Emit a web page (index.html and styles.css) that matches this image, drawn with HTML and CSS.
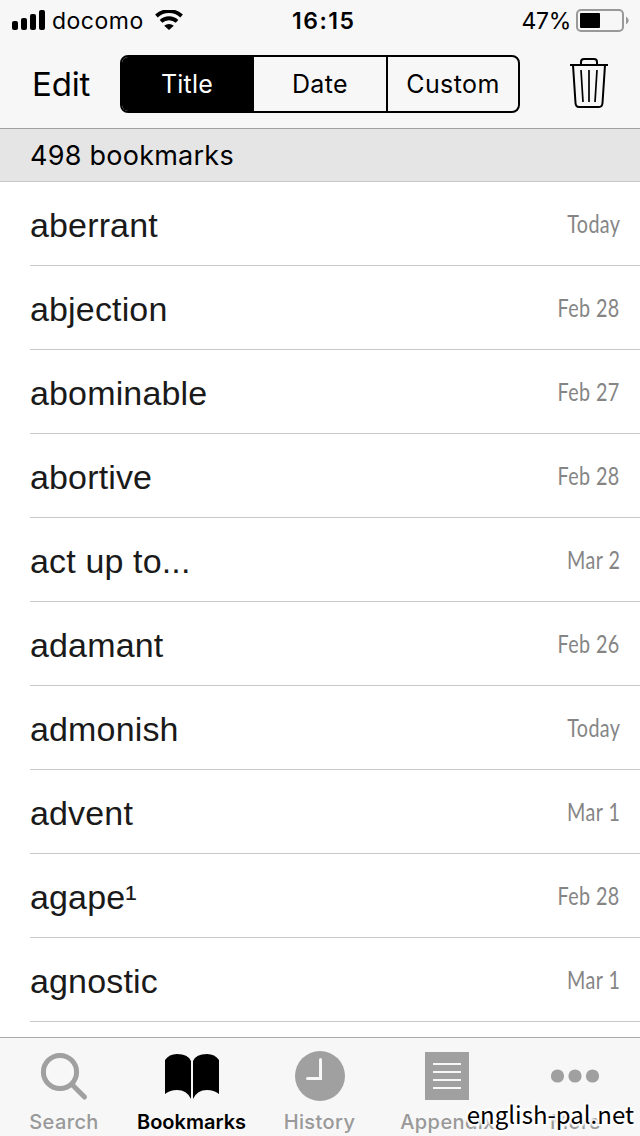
FILE: index.html
```html
<!DOCTYPE html>
<html lang="en">
<head>
<meta charset="utf-8">
<title>Bookmarks</title>
<link rel="stylesheet" href="styles.css">
</head>
<body>
<div class="app">
  <header class="top">
    <div class="status">
      <svg class="signal" width="34" height="20" viewBox="0 0 34 20"><rect x="0" y="11" width="6" height="9" rx="2"/><rect x="9" y="8" width="6" height="12" rx="2"/><rect x="18" y="4" width="6" height="16" rx="2"/><rect x="27" y="0" width="6" height="20" rx="2"/></svg>
      <span class="carrier">docomo</span>
      <svg class="wifi" width="28" height="20" viewBox="0 0 28 20"><path d="M1.400 6a18.500 18.500 0 0 1 25.200 0M6 11.400a11.800 11.800 0 0 1 16 0" fill="none" stroke="#000" stroke-width="3.800"/><path d="M9.200 15.800a7 7 0 0 1 9.600 0L14 20z"/></svg>
      <span class="clock">16:15</span>
      <span class="percent">47%</span>
      <svg class="battery" width="53" height="24" viewBox="0 0 53 24"><rect x="1" y="1" width="46" height="21" rx="4" fill="none" stroke="#999" stroke-width="2"/><rect x="4" y="4" width="20" height="15" rx="1"/><path d="M50 7.500c3.500 2.500 3.500 5.500 0 8z" fill="#999"/></svg>
    </div>
    <nav class="toolbar">
      <span class="edit">Edit</span>
      <div class="segments"><span class="segment chosen">Title</span><span class="segment">Date</span><span class="segment">Custom</span></div>
      <svg class="trash" width="38" height="52" viewBox="0 0 38 52" fill="none" stroke="#000" stroke-width="2"><path d="M0 8h38M11 8V5q0-3 3-3h10q3 0 3 3v3M3 8l2.500 38q.3 4 3.500 4h20q3.200 0 3.500-4L35 8"/><path d="M11 13l2 32M19 13v32M27 13l-2 32" stroke-width="1.700"/></svg>
    </nav>
  </header>
  <div class="count"><span>498 bookmarks</span></div>
  <main class="list">
    <div class="row"><span class="word">aberrant</span><span class="date">Today</span></div>
    <div class="row"><span class="word">abjection</span><span class="date">Feb 28</span></div>
    <div class="row"><span class="word">abominable</span><span class="date">Feb 27</span></div>
    <div class="row"><span class="word">abortive</span><span class="date">Feb 28</span></div>
    <div class="row"><span class="word">act up to...</span><span class="date">Mar 2</span></div>
    <div class="row"><span class="word">adamant</span><span class="date">Feb 26</span></div>
    <div class="row"><span class="word">admonish</span><span class="date">Today</span></div>
    <div class="row"><span class="word">advent</span><span class="date">Mar 1</span></div>
    <div class="row"><span class="word">agape¹</span><span class="date">Feb 28</span></div>
    <div class="row"><span class="word">agnostic</span><span class="date">Mar 1</span></div>
  </main>
  <footer class="tabs">
    <div class="tab"><svg width="56" height="54" viewBox="0 0 56 54" fill="none" stroke="#a0a0a0"><circle cx="24" cy="25" r="16.600" stroke-width="5"/><path d="M36 37.500L48.500 50" stroke-width="5" stroke-linecap="round"/></svg><span>Search</span></div>
    <div class="tab active"><svg width="56" height="54" viewBox="0 0 56 54"><path d="M2 13Q6 7 14 7q11 0 14 7v38Q24 43 14 43q-7 0-12 4zM30 14q3-7 14-7 8 0 12 6v34q-5-4-12-4-10 0-14 9z"/></svg><span>Bookmarks</span></div>
    <div class="tab"><svg width="56" height="54" viewBox="0 0 56 54"><circle cx="29" cy="29" r="25" fill="#a0a0a0"/><path d="M29.500 12.500v19H16.500" fill="none" stroke="#f7f7f7" stroke-width="3" stroke-linecap="round"/></svg><span>History</span></div>
    <div class="tab"><svg width="56" height="54" viewBox="0 0 56 54"><path d="M6 5h44v48H6z" fill="#a0a0a0"/><path d="M14 17h28M14 25h28M14 33h28M14 41h28" stroke="#f7f7f7" stroke-width="2"/></svg><span>Appendix</span></div>
    <div class="tab"><svg width="56" height="54" viewBox="0 0 56 54" fill="#a0a0a0"><circle cx="10.500" cy="29" r="6.600"/><circle cx="28" cy="29" r="6.600"/><circle cx="45.500" cy="29" r="6.600"/></svg><span>More</span></div>
  </footer>
  <div class="watermark">english-pal.net</div>
</div>
</body>
</html>
```
FILE: styles.css
```css
* { box-sizing: border-box; }
body { margin: 0; background: #fff; font-family: Inter, sans-serif; color: #000; }
svg { display: block; flex: none; }
.app { position: relative; width: 640px; height: 1136px; display: flex; flex-direction: column; overflow: hidden; }
.top { height: 129px; background: #f7f7f7; border-bottom: 1px solid #a0a0a0; flex: none; }
.status { height: 40px; display: flex; align-items: center; padding: 0 11px 0 12px; font-size: 23px; line-height: 40px; }
.status span { padding-top: 2px; }
.carrier { width: 103px; padding-left: 6px; letter-spacing: .5px; }
.wifi { margin-left: 6px; }
.clock { margin-left: 109px; width: 70px; font-weight: 600; letter-spacing: 1.5px; }
.percent { margin-left: auto; letter-spacing: -.3px; margin-right: 5px; }
.battery { margin-top: 1px; }
.toolbar { height: 88px; display: flex; align-items: center; padding: 0 32px; }
.edit { width: 88px; font-size: 33px; letter-spacing: -.2px; }
.segments { width: 400px; height: 58px; display: grid; grid-template-columns: repeat(3, 132px); border: 2px solid #000; border-radius: 8px; overflow: hidden; }
.segment { display: flex; align-items: center; justify-content: center; font-size: 25px; letter-spacing: .4px; }
.segment:last-child { border-left: 2px solid #000; letter-spacing: .4px; }
.chosen { background: #000; color: #fff; padding-right: 2px; letter-spacing: .2px; }
.trash { margin-left: auto; margin-top: -3px; }
.count { height: 53px; flex: none; background: #e5e5e5; border-bottom: 1px solid #c8c8c8; padding-left: 30px; font-size: 27px; line-height: 54px; letter-spacing: .25px; }
.list { flex: 1; padding-left: 30px; background: #fff; }
.row { height: 84px; display: flex; justify-content: space-between; align-items: center; padding-right: 20px; border-bottom: 1px solid #c8c8c8; }
.word { font: 34px/40px "Liberation Sans", sans-serif; color: #1a1a1a; letter-spacing: .15px; margin-top: 2px; }
.date { font: 25px/34px Lato, sans-serif; color: #858585; letter-spacing: .5px; margin-top: -2px; transform: scaleX(.79); transform-origin: right center; }
.tabs { height: 99px; flex: none; display: grid; grid-template-columns: 127px repeat(4, 128px); background: #f7f7f7; border-top: 1px solid #acacac; }
.tab { display: flex; flex-direction: column; align-items: center; padding-top: 9px; font-size: 20px; font-weight: 500; line-height: 24px; letter-spacing: .4px; color: #999; }
.tab svg { margin-bottom: 9px; }
.tab span { margin-left: 1px; }
.active { color: #000; font-weight: 600; letter-spacing: 0; }
.watermark { position: absolute; right: 6px; top: 1095px; font: 24px/38px "Noto Sans CJK JP", sans-serif; color: #000; text-shadow: 0 0 3px #fff, 2px 0 2px #fff, -2px 0 2px #fff, 0 2px 2px #fff, 0 -2px 2px #fff, 2px 2px 2px #fff, -2px -2px 2px #fff; }
```
